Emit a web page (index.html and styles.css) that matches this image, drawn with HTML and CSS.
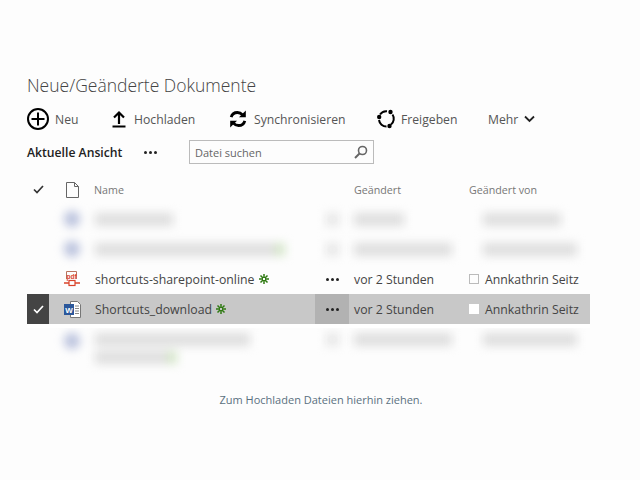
FILE: index.html
```html
<!DOCTYPE html>
<html lang="de">
<head>
  <meta charset="UTF-8">
  <title>Neue/Geänderte Dokumente</title>
  <link rel="stylesheet" href="styles.css">
</head>
<body>
  <div class="container">
    <h1 class="title">Neue/Geänderte Dokumente</h1>

    <div class="toolbar">
      <div class="tool tool-new">
        <svg width="24" height="24" viewBox="0 0 24 24"><circle cx="12" cy="12" r="10" fill="none" stroke="#000" stroke-width="2"/><path d="M5.500 12h13M12 5.500v13" stroke="#000" stroke-width="2"/></svg>
        <span>Neu</span>
      </div>
      <div class="tool tool-upload">
        <svg width="16" height="18" viewBox="0 0 16 18"><path d="M8 14V3M3 7.500L8 2.500l5 5" fill="none" stroke="#000" stroke-width="2.200"/><path d="M1.500 16.500h13" stroke="#000" stroke-width="2"/></svg>
        <span>Hochladen</span>
      </div>
      <div class="tool tool-sync">
        <svg width="20" height="20" viewBox="0 0 20 20"><path d="M3.200 8.200C4 5 6.400 3.500 9.500 3.500c2 0 3.600.8 4.800 2.200" fill="none" stroke="#000" stroke-width="2.800"/><path d="M17.800 1.500v6.800h-6.800z"/><path d="M16.800 11.800C16 15 13.600 16.500 10.500 16.500c-2 0-3.600-.8-4.800-2.200" fill="none" stroke="#000" stroke-width="2.800"/><path d="M2.200 18.500v-6.800h6.800z"/></svg>
        <span>Synchronisieren</span>
      </div>
      <div class="tool tool-share">
        <svg width="20" height="20" viewBox="0 0 20 20"><path d="M4 5.500A7.500 7.500 0 0 1 11 2.200M16.500 5.500A7.500 7.500 0 0 1 15 15.500M10.500 17.500A7.500 7.500 0 0 1 3 11" fill="none" stroke="#000" stroke-width="2"/><circle cx="3.200" cy="8" r="2.200"/><circle cx="14.500" cy="3" r="2.200"/><circle cx="13.500" cy="17" r="2.200"/></svg>
        <span>Freigeben</span>
      </div>
      <div class="tool tool-more">
        <span>Mehr</span>
        <svg width="11" height="8" viewBox="0 0 11 8"><path d="M1 1.500l4.500 4.500L10 1.500" fill="none" stroke="#222" stroke-width="1.800"/></svg>
      </div>
    </div>

    <div class="view-bar">
      <span class="view-name">Aktuelle Ansicht</span>
      <span class="dots view-dots"><i></i><i></i><i></i></span>
      <div class="search">
        <span>Datei suchen</span>
        <svg width="14" height="14" viewBox="0 0 14 14"><circle cx="8.500" cy="5.500" r="4" fill="none" stroke="#666" stroke-width="1.600"/><path d="M5.500 8.500L1 13" stroke="#666" stroke-width="2"/></svg>
      </div>
    </div>

    <div class="list">
      <div class="row row-head">
        <div class="cell-check">
          <svg width="11" height="9" viewBox="0 0 11 9"><path d="M1 4.500l3 3L10 1" fill="none" stroke="#333" stroke-width="1.700"/></svg>
        </div>
        <div class="cell-icon">
          <svg width="13" height="16" viewBox="0 0 13 16"><path d="M.5.500h8l4 4v11H.500zM8.500.500v4h4" fill="none" stroke="#666"/></svg>
        </div>
        <div class="cell-name">Name</div>
        <div class="cell-more"></div>
        <div class="cell-date">Geändert</div>
        <div class="cell-author">Geändert von</div>
      </div>

      <div class="blurred blurred-top">
        <div class="row">
          <div class="cell-check"></div>
          <div class="cell-icon"><b class="smudge-icon"></b></div>
          <div class="cell-name"><b class="smudge" style="width:78px"></b></div>
          <div class="cell-more"><b class="smudge-dots"></b></div>
          <div class="cell-date"><b class="smudge" style="width:50px"></b></div>
          <div class="cell-author"><b class="smudge smudge-author" style="width:78px"></b></div>
        </div>
        <div class="row">
          <div class="cell-check"></div>
          <div class="cell-icon"><b class="smudge-icon"></b></div>
          <div class="cell-name"><b class="smudge" style="width:180px"></b><b class="smudge-new"></b></div>
          <div class="cell-more"><b class="smudge-dots"></b></div>
          <div class="cell-date"><b class="smudge" style="width:98px"></b></div>
          <div class="cell-author"><b class="smudge smudge-author" style="width:94px"></b></div>
        </div>
      </div>

      <div class="row">
        <div class="cell-check"></div>
        <div class="cell-icon">
          <svg width="16" height="17" viewBox="0 0 16 17"><path d="M2.500 8V.500h10V8" fill="none" stroke="#b9745f"/><path d="M0 12h5M11 12h5" stroke="#d9432a" stroke-width="1.500"/><rect x="5" y="9.500" width="6" height="5" fill="none" stroke="#d9432a" stroke-width="1.200"/><text x="7.500" y="7.500" class="pdf-label">pdf</text></svg>
        </div>
        <div class="cell-name">shortcuts-sharepoint-online<svg class="new-mark" width="10" height="10" viewBox="0 0 10 10"><path d="M5 0v10M0 5h10M1.500 1.500l7 7M8.500 1.500l-7 7" stroke="#2f7a12" stroke-width="1.500"/><rect x="4" y="4" width="2" height="2" fill="#fff"/></svg></div>
        <div class="cell-more"><span class="dots"><i></i><i></i><i></i></span></div>
        <div class="cell-date">vor 2 Stunden</div>
        <div class="cell-author"><span class="presence"></span>Annkathrin Seitz</div>
      </div>

      <div class="row row-selected">
        <div class="cell-check">
          <svg width="11" height="9" viewBox="0 0 11 9"><path d="M1 4.500l3 3L10 1" fill="none" stroke="#fff" stroke-width="1.700"/></svg>
        </div>
        <div class="cell-icon">
          <svg width="17" height="17" viewBox="0 0 17 17"><path d="M6.500.500h7l3 3v13h-10z" fill="#fff" stroke="#777"/><path d="M11 5h4M11 7.500h4M11 10h4M11 12.500h4" stroke="#888"/><rect x="0" y="3" width="10" height="11" fill="#2b579a"/><text x="5" y="11.500" class="word-label">W</text></svg>
        </div>
        <div class="cell-name">Shortcuts_download<svg class="new-mark" width="10" height="10" viewBox="0 0 10 10"><path d="M5 0v10M0 5h10M1.500 1.500l7 7M8.500 1.500l-7 7" stroke="#2f7a12" stroke-width="1.500"/><rect x="4" y="4" width="2" height="2" fill="#c8c8c8"/></svg></div>
        <div class="cell-more"><span class="dots"><i></i><i></i><i></i></span></div>
        <div class="cell-date">vor 2 Stunden</div>
        <div class="cell-author"><span class="presence"></span>Annkathrin Seitz</div>
      </div>

      <div class="blurred blurred-bottom">
        <div class="row row-tall">
          <div class="cell-check"></div>
          <div class="cell-icon"><b class="smudge-icon"></b></div>
          <div class="cell-name">
            <b class="smudge" style="width:155px"></b>
            <b class="smudge" style="width:72px"></b><b class="smudge-new"></b>
          </div>
          <div class="cell-more"><b class="smudge-dots"></b></div>
          <div class="cell-date"><b class="smudge" style="width:98px"></b></div>
          <div class="cell-author"><b class="smudge smudge-author" style="width:94px"></b></div>
        </div>
      </div>
    </div>

    <p class="drop-hint">Zum Hochladen Dateien hierhin ziehen.</p>
  </div>
</body>
</html>
```

FILE: styles.css
```css
:root {
  --text-primary: #444;
  --text-secondary: #777;
  --text-strong: #222;
  --row-selected: #c8c8c8;
  --cell-selected: #b2b2b2;
  --check-selected: #444;
  --smudge: #dedede;
}

* {
  box-sizing: border-box;
  margin: 0;
  padding: 0;
}

body {
  font-family: "Open Sans", "Noto Sans", sans-serif;
  background-color: #fdfdfd;
  color: var(--text-primary);
  overflow: hidden;
}

.container {
  padding: 73px 50px 0 27px;
}

.title {
  font-size: 17.5px;
  font-weight: 300;
  line-height: 25px;
  color: #444;
}

.toolbar {
  display: flex;
  align-items: center;
  height: 30px;
  margin-top: 6px;
  font-size: 12.200px;
  color: #555;
}

.tool {
  display: flex;
  align-items: center;
}

.tool-new { width: 84px; gap: 5px; }
.tool-new svg { margin-left: -1px; }
.tool-upload { width: 117px; gap: 7px; }
.tool-sync { width: 148px; gap: 6px; }
.tool-share { width: 112px; gap: 5px; }
.tool-more { gap: 6px; }

.view-bar {
  display: flex;
  align-items: center;
  height: 26px;
  margin-top: 5px;
}

.view-name {
  width: 117px;
  font-size: 12.200px;
  font-weight: 600;
  color: var(--text-strong);
}

.dots {
  display: inline-flex;
  gap: 2px;
}

.dots i {
  width: 3px;
  height: 3px;
  border-radius: 50%;
  background-color: #222;
}

.view-dots { width: 45px; }

.search {
  display: flex;
  align-items: center;
  justify-content: space-between;
  width: 185px;
  height: 24px;
  padding: 0 5px;
  border: 1px solid #bbb;
  font-size: 11px;
  color: #666;
}

.list {
  margin-top: 10px;
  width: 563px;
}

.row {
  display: grid;
  grid-template-columns: 22px 46px 220px 34px 120px 121px;
  align-items: center;
  height: 30px;
  font-size: 12.300px;
}

.row > div {
  display: flex;
  align-items: center;
  height: 100%;
}

.cell-check,
.cell-icon,
.cell-more {
  justify-content: center;
}

.cell-date { padding-left: 5px; }

.row-head {
  height: 29px;
  font-size: 10.700px;
  color: var(--text-secondary);
}

.row-head .cell-name { margin-left: -1px; }

.row-selected {
  position: relative;
  z-index: 1;
  background-color: var(--row-selected);
  box-shadow: 0 4px 0 #fff;
}

.row-selected .cell-check { background-color: var(--check-selected); }
.row-selected .cell-more { background-color: var(--cell-selected); }
.row-selected .presence { background-color: #fff; border-color: #fff; }

.new-mark { margin-left: 4px; flex-shrink: 0; }

.presence {
  width: 10px;
  height: 10px;
  margin-right: 6px;
  border: 1px solid #bbb;
}

.pdf-label {
  font-family: "Liberation Sans", sans-serif;
  font-size: 6.500px;
  font-weight: 700;
  fill: #d9432a;
  text-anchor: middle;
}

.word-label {
  font-family: "Liberation Sans", sans-serif;
  font-size: 8px;
  font-weight: 700;
  fill: #fff;
  text-anchor: middle;
}

.blurred {
  filter: blur(5px);
}

.blurred .cell-name { flex-wrap: wrap; align-content: center; gap: 5px 0; }

.blurred-bottom {
  margin-top: 4px;
}

.row-tall { height: 44px; }
.row-tall > div { align-items: flex-start; padding-top: 5px; }
.row-tall .cell-name { align-content: flex-start; }

.smudge {
  display: block;
  height: 13px;
  background-color: var(--smudge);
}

.smudge-author { margin-left: 14px; }

.smudge-icon {
  display: block;
  width: 16px;
  height: 16px;
  border-radius: 50%;
  background-color: #b8c0dc;
}

.smudge-dots {
  display: block;
  width: 13px;
  height: 13px;
  background-color: #e6e6e6;
}

.smudge-new {
  display: block;
  width: 10px;
  height: 13px;
  background-color: #d4e6c8;
}

.drop-hint {
  margin-top: 20px;
  width: 588px;
  text-align: center;
  font-size: 11px;
  color: #5a7080;
}
```
